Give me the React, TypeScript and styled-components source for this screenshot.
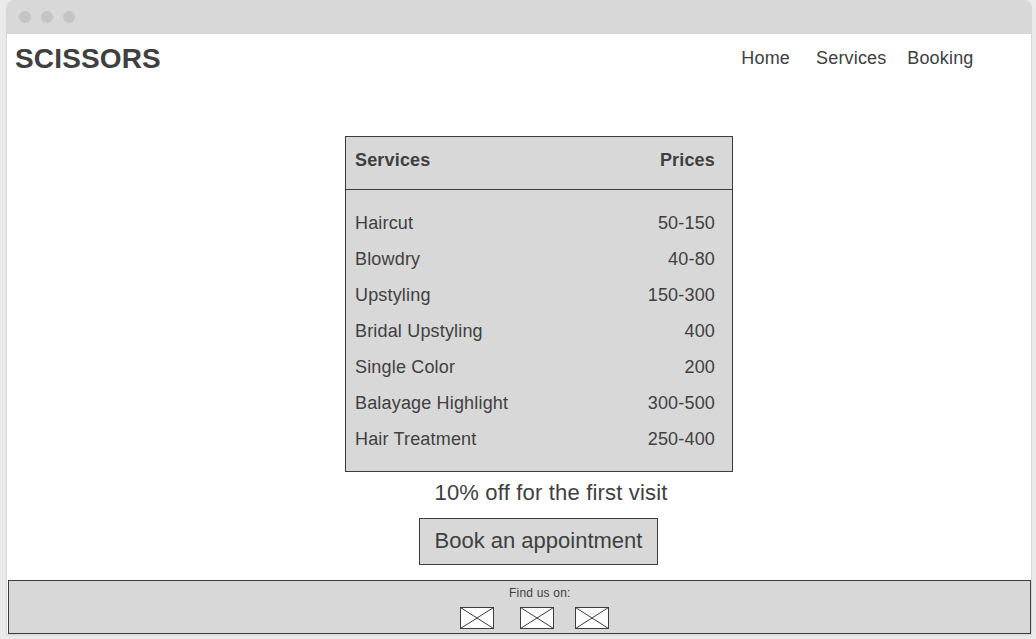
import React from "react";
import styled, { createGlobalStyle } from "styled-components";

const INK = "#3d3d3d";
const PANEL = "#d8d8d8";

const GlobalStyle = createGlobalStyle`
  *, *::before, *::after { box-sizing: border-box; }
  html, body { margin: 0; height: 639px; overflow: hidden; background: #ebebeb; }
  body {
    font-family: "Liberation Sans", Arial, sans-serif;
    color: #404040;
  }
`;

const Desktop = styled.div`
  width: 1036px;
  height: 639px;
  padding: 1px 5px 5px 7px;
  background: #ebebeb;
`;

const BrowserWindow = styled.div`
  display: flex;
  flex-direction: column;
  width: 1024px;
  height: 633px;
  background: #fff;
  border-radius: 7px 7px 0 0;
  box-shadow: 0 0 0 1px #d8d8d8, 0 1px 3px rgba(0, 0, 0, 0.1);
`;

const TitleBar = styled.div`
  display: flex;
  align-items: center;
  gap: 10px;
  height: 33px;
  padding: 0 0 1px 12px;
  border-radius: 6px 6px 0 0;
  background: ${PANEL};
`;

const WindowDot = styled.span`
  width: 12px;
  height: 12px;
  border-radius: 50%;
  background: #c4c4c4;
`;

const Header = styled.header`
  display: flex;
  justify-content: space-between;
  height: 102px;
  padding: 8px 57.5px 0 8px;
`;

const Brand = styled.h1`
  margin: 0;
  font-size: 28px;
  line-height: 34px;
  font-weight: 700;
  letter-spacing: 0.15px;
`;

const Nav = styled.nav`
  display: flex;
  padding-top: 4px;
`;

const NavLink = styled.a<{ $gap?: number }>`
  margin-right: ${({ $gap = 0 }) => $gap}px;
  font-size: 18px;
  line-height: 24px;
  letter-spacing: 0.17px;
`;

const PriceList = styled.section`
  width: 388px;
  height: 336px;
  margin-left: 338px;
  border: 1px solid ${INK};
  background: ${PANEL};
`;

const Row = styled.div`
  display: flex;
  justify-content: space-between;
  padding: 0 17px 0 9px;
  font-size: 18px;
  line-height: 36px;
  letter-spacing: 0.17px;
`;

const HeadRow = styled(Row)`
  height: 53px;
  padding-top: 5px;
  border-bottom: 1px solid ${INK};
  font-weight: 700;
`;

const Rows = styled.div`
  padding-top: 15px;
`;

const Offer = styled.p`
  margin: 8px 0 0 427.5px;
  font-size: 22px;
  line-height: 26px;
  letter-spacing: 0.18px;
  white-space: nowrap;
`;

const BookButton = styled.button`
  width: 239px;
  height: 47px;
  margin: 12px 0 0 412px;
  padding: 0 0 2px;
  border: 1px solid ${INK};
  background: ${PANEL};
  color: #404040;
  font: 22px/26px "Liberation Sans", Arial, sans-serif;
  white-space: nowrap;
`;

const Footer = styled.footer`
  width: 1023px;
  height: 54px;
  margin: 15px 0 0 1px;
  border: 1px solid ${INK};
  background: ${PANEL};
`;

const FooterLabel = styled.div`
  margin: 4px 0 0 500px;
  font-size: 12px;
  line-height: 16px;
  letter-spacing: 0.2px;
`;

const Socials = styled.div`
  display: flex;
  margin: 6px 0 0 451px;
`;

const Placeholder = styled.svg<{ $gap?: number }>`
  display: block;
  width: 34px;
  height: 22px;
  margin-right: ${({ $gap = 0 }) => $gap}px;
`;

const services = [
  ["Haircut", "50-150"],
  ["Blowdry", "40-80"],
  ["Upstyling", "150-300"],
  ["Bridal Upstyling", "400"],
  ["Single Color", "200"],
  ["Balayage Highlight", "300-500"],
  ["Hair Treatment", "250-400"],
];

const ImagePlaceholder = ({ gap }: { gap?: number }) => (
  <Placeholder $gap={gap} viewBox="0 0 34 22" fill="none" stroke={INK}>
    <rect x="0.5" y="0.5" width="33" height="21" fill="#fff" />
    <path d="M0.5 0.5L33.5 21.5M33.5 0.5L0.5 21.5" />
  </Placeholder>
);

export default function App() {
  return (
    <Desktop>
      <GlobalStyle />
      <BrowserWindow>
        <TitleBar>
          <WindowDot />
          <WindowDot />
          <WindowDot />
        </TitleBar>
        <Header>
          <Brand>SCISSORS</Brand>
          <Nav>
            <NavLink $gap={26}>Home</NavLink>
            <NavLink $gap={20.8}>Services</NavLink>
            <NavLink>Booking</NavLink>
          </Nav>
        </Header>
        <PriceList>
          <HeadRow>
            <span>Services</span>
            <span>Prices</span>
          </HeadRow>
          <Rows>
            {services.map(([name, price]) => (
              <Row key={name}>
                <span>{name}</span>
                <span>{price}</span>
              </Row>
            ))}
          </Rows>
        </PriceList>
        <Offer>10% off for the first visit</Offer>
        <BookButton>Book an appointment</BookButton>
        <Footer>
          <FooterLabel>Find us on:</FooterLabel>
          <Socials>
            <ImagePlaceholder gap={26} />
            <ImagePlaceholder gap={21} />
            <ImagePlaceholder />
          </Socials>
        </Footer>
      </BrowserWindow>
    </Desktop>
  );
}
